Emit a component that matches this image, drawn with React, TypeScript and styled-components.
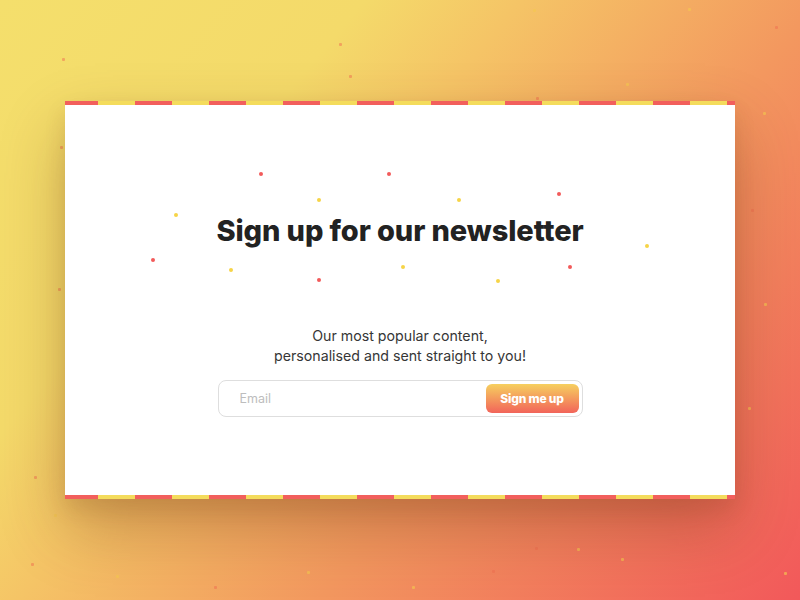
import React from "react";
import styled, { createGlobalStyle } from "styled-components";

const GlobalStyle = createGlobalStyle`
  html, body { margin: 0; padding: 0; }
  body { font-family: "Inter", "Noto Sans", sans-serif; }
  * { box-sizing: border-box; }
`;

const Page = styled.div`
  position: relative;
  width: 800px;
  height: 600px;
  overflow: hidden;
  display: flex;
  align-items: center;
  justify-content: center;
  background: linear-gradient(130deg, #f4df6c 0%, #f4da6a 28%, #f5c466 40%, #f3985f 63%, #f2585a 100%);
`;

const Speck = styled.span<{ $tone: "red" | "yellow" }>`
  position: absolute;
  width: 3px;
  height: 3px;
  border-radius: 1px;
  background: ${(p) => (p.$tone === "red" ? "rgba(240, 110, 80, 0.5)" : "rgba(245, 200, 80, 0.65)")};
`;

const Card = styled.div`
  position: relative;
  width: 670px;
  height: 398px;
  background: #fff;
  display: flex;
  flex-direction: column;
  align-items: center;
  padding-top: 64px;
  box-shadow: 0 30px 60px rgba(110, 50, 20, 0.32), 0 10px 20px rgba(110, 50, 20, 0.12);
`;

const Stripe = styled.div<{ $side: "top" | "bottom" }>`
  position: absolute;
  left: 0;
  right: 0;
  ${(p) => (p.$side === "top" ? "top: 0;" : "bottom: 0;")}
  height: 4px;
  background: repeating-linear-gradient(90deg, #f25f5c 0 37px, #f4dc5c 37px 74px);
  background-position: -4px 0;
`;

const Hero = styled.div`
  position: relative;
  width: 520px;
  height: 130px;
  display: flex;
  align-items: center;
  justify-content: center;
`;

const Dot = styled.span<{ $tone: "red" | "yellow" }>`
  position: absolute;
  width: 4px;
  height: 4px;
  border-radius: 50%;
  background: ${(p) => (p.$tone === "red" ? "#f25a5a" : "#f6d447")};
`;

const Title = styled.h1`
  margin: 0;
  font-family: "Inter", sans-serif;
  font-weight: 800;
  font-size: 29px;
  letter-spacing: -0.1px;
  color: #222;
`;

const Subtitle = styled.p`
  margin: 31px 0 0;
  font-family: "Inter", sans-serif;
  font-size: 14.2px;
  line-height: 20px;
  color: #363636;
  text-align: center;
`;

const Form = styled.form`
  margin-top: 14px;
  width: 365px;
  height: 37px;
  border: 1px solid #dedede;
  border-radius: 8px;
  display: flex;
  align-items: center;
  padding: 0 3px 0 19px;
`;

const EmailInput = styled.input`
  flex: 1;
  border: none;
  outline: none;
  background: transparent;
  font-family: "Inter", sans-serif;
  font-size: 12.5px;
  color: #333;
  &::placeholder { color: #bdbdbd; }
`;

const Button = styled.button`
  width: 93px;
  height: 29px;
  border: none;
  border-radius: 6px;
  background: linear-gradient(180deg, #f6d05f 0%, #f2645a 100%);
  color: #fff;
  font-family: "Inter", sans-serif;
  font-weight: 800;
  font-size: 12px;
  letter-spacing: -0.2px;
  cursor: pointer;
`;

const heroDots: { x: number; y: number; t: "red" | "yellow" }[] = [
  { x: 261, y: 175, t: "red" },
  { x: 389, y: 175, t: "red" },
  { x: 559, y: 195, t: "red" },
  { x: 153, y: 261, t: "red" },
  { x: 570, y: 268, t: "red" },
  { x: 319, y: 281, t: "red" },
  { x: 176, y: 216, t: "yellow" },
  { x: 319, y: 201, t: "yellow" },
  { x: 459, y: 201, t: "yellow" },
  { x: 647, y: 247, t: "yellow" },
  { x: 231, y: 271, t: "yellow" },
  { x: 403, y: 268, t: "yellow" },
  { x: 498, y: 282, t: "yellow" },
];

const specks: { x: number; y: number; t: "red" | "yellow" }[] = [
  { x: 63, y: 59, t: "red" },
  { x: 340, y: 44, t: "red" },
  { x: 350, y: 76, t: "red" },
  { x: 534, y: 10, t: "yellow" },
  { x: 689, y: 9, t: "yellow" },
  { x: 776, y: 27, t: "red" },
  { x: 627, y: 84, t: "yellow" },
  { x: 537, y: 98, t: "red" },
  { x: 61, y: 147, t: "red" },
  { x: 59, y: 289, t: "red" },
  { x: 35, y: 477, t: "red" },
  { x: 764, y: 113, t: "yellow" },
  { x: 752, y: 210, t: "red" },
  { x: 765, y: 304, t: "yellow" },
  { x: 749, y: 408, t: "yellow" },
  { x: 55, y: 515, t: "yellow" },
  { x: 32, y: 564, t: "red" },
  { x: 117, y: 576, t: "yellow" },
  { x: 215, y: 587, t: "red" },
  { x: 308, y: 572, t: "yellow" },
  { x: 536, y: 548, t: "red" },
  { x: 578, y: 549, t: "yellow" },
  { x: 622, y: 559, t: "yellow" },
  { x: 493, y: 571, t: "red" },
  { x: 413, y: 587, t: "yellow" },
  { x: 785, y: 573, t: "yellow" },
];

export default function App() {
  return (
    <>
      <GlobalStyle />
      <Page>
        {specks.map((s, i) => (
          <Speck key={i} $tone={s.t} style={{ left: s.x - 1, top: s.y - 1 }} />
        ))}
        <Card>
          <Stripe $side="top" />
          <Hero>
            {heroDots.map((d, i) => (
              <Dot key={i} $tone={d.t} style={{ left: d.x - 140 - 2, top: d.y - 166 - 2 }} />
            ))}
            <Title>Sign up for our newsletter</Title>
          </Hero>
          <Subtitle>
            Our most popular content,
            <br />
            personalised and sent straight to you!
          </Subtitle>
          <Form onSubmit={(e) => e.preventDefault()}>
            <EmailInput type="email" placeholder="Email" />
            <Button type="submit">Sign me up</Button>
          </Form>
          <Stripe $side="bottom" />
        </Card>
      </Page>
    </>
  );
}
